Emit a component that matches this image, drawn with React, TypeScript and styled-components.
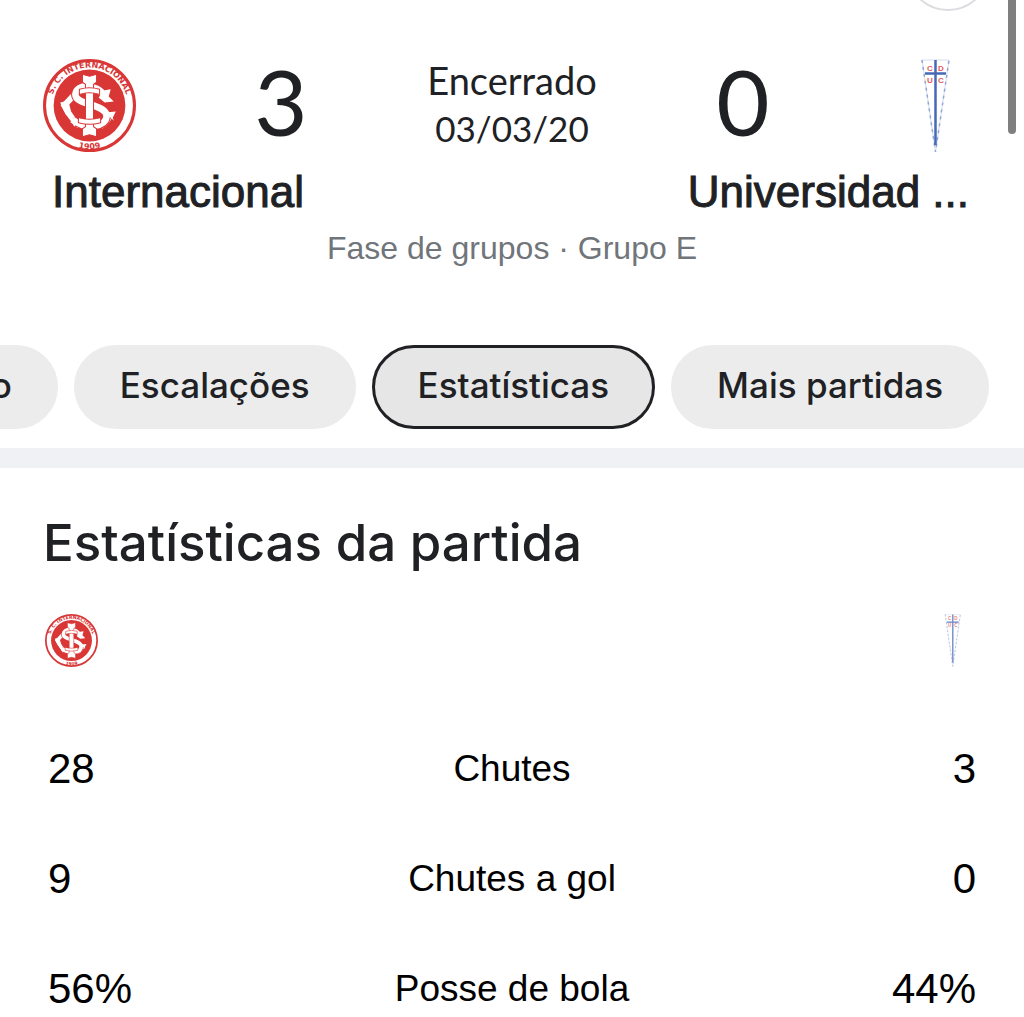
import React from "react";
import styled, { createGlobalStyle } from "styled-components";

const display = `Inter, "Open Sans", sans-serif`;
const body = `"Liberation Sans", Arial, sans-serif`;

const GlobalStyle = createGlobalStyle`
  * { box-sizing: border-box; }
  body { margin: 0; background: #fff; color: #202124; font-family: ${body}; }
`;

const Page = styled.div`
  position: relative;
  height: 100vh;
  overflow: hidden;
  background: #fff;
`;

const ScrollThumb = styled.div`
  position: absolute;
  top: -8px;
  right: 8px;
  width: 8px;
  height: 142px;
  border-radius: 4px;
  background: #7f7f7f;
`;

const RoundButton = styled.button`
  position: absolute;
  top: -73px;
  right: 34px;
  width: 84px;
  height: 84px;
  padding: 0;
  border: 2px solid #dadce0;
  border-radius: 50%;
  background: #fff;
`;

const Match = styled.header`
  display: flex;
  flex-direction: column;
  gap: 16px;
  padding: 56px 43px 0;
`;

const Board = styled.div`
  display: flex;
  justify-content: space-between;
`;

const Team = styled.div<{ $away?: boolean }>`
  display: flex;
  flex-direction: column;
  align-items: ${(p) => (p.$away ? "flex-end" : "center")};
  gap: 12px;
  width: 270px;
`;

const ScoreRow = styled.div<{ $away?: boolean }>`
  display: flex;
  flex-direction: ${(p) => (p.$away ? "row-reverse" : "row")};
  align-items: flex-start;
  justify-content: space-between;
  width: 100%;
  height: 100px;
  padding-top: 3px;
`;

const Score = styled.span`
  width: 64px;
  text-align: center;
  font: 400 92px/84px Lato, sans-serif;
`;

const TeamName = styled.span<{ $away?: boolean }>`
  padding-right: ${(p) => (p.$away ? "12px" : "0")};
  white-space: nowrap;
  font-size: 44px;
  line-height: 48px;
  -webkit-text-stroke: 1px #202124;
`;

const Status = styled.div`
  display: flex;
  flex-direction: column;
  text-align: center;
  font: 400 38px/48px Lato, sans-serif;
`;

const MatchDate = styled.time`
  font-size: 35px;
`;

const Stage = styled.p`
  margin: 0;
  text-align: center;
  color: #70757a;
  font-size: 32px;
  line-height: 32px;
`;

const Chips = styled.nav`
  display: flex;
  justify-content: flex-end;
  gap: 16px;
  padding: 81px 35px 19px 0;
  border-bottom: 20px solid #eff1f4;
`;

const Chip = styled.button<{ $active?: boolean }>`
  flex: none;
  height: 84px;
  padding: 0 43px 4px;
  border: ${(p) => (p.$active ? "3px solid #202124" : "3px solid #ececec")};
  border-radius: 42px;
  background: ${(p) => (p.$active ? "#e6e6e6" : "#ececec")};
  color: #202124;
  font: 500 35px/40px ${display};
`;

const Stats = styled.section`
  padding: 45px 43px 0;
`;

const Title = styled.h2`
  margin: 0;
  font: 500 51px/60px ${display};
`;

const Crests = styled.div`
  display: flex;
  justify-content: space-between;
  padding: 41px 2px 46px;
`;

const Table = styled.table`
  width: 100%;
  border-collapse: collapse;
  table-layout: fixed;
  color: #000;
`;

const Value = styled.td<{ $away?: boolean }>`
  width: 25%;
  height: 110px;
  padding: 0 5px;
  text-align: ${(p) => (p.$away ? "right" : "left")};
  font-size: 42px;
  line-height: 48px;
`;

const Label = styled.th`
  padding: 0;
  font-size: 37px;
  line-height: 48px;
  font-weight: 400;
`;

function InterCrest({ size, id }: { size: number; id: string }) {
  const letterS = "M61 37C54 24 33 24 32 35C32 46 62 44 63 56C63 68 42 70 29 60";
  return (
    <svg width={size} height={size} viewBox="0 0 92 92" role="img" aria-label="Internacional">
      <defs>
        <path id={`${id}-top`} d="M8.500 51A37.800 37.800 0 1 1 83.500 51" />
        <path id={`${id}-bottom`} d="M20 80.500A43 43 0 0 0 72 80.500" />
      </defs>
      <circle cx="46" cy="46" r="44.500" fill="#fff" stroke="#d93636" strokeWidth="3" />
      <circle cx="46" cy="46" r="35.500" fill="#d93636" />
      <g fill="#d93636" fontFamily="DejaVu Sans, sans-serif" fontWeight="700" fontSize="8" textAnchor="middle">
        <text>
          <textPath href={`#${id}-top`} startOffset="50%">S. C. INTERNACIONAL</textPath>
        </text>
        <text>
          <textPath href={`#${id}-bottom`} startOffset="50%">1909</textPath>
        </text>
      </g>
      <path d="M37 29L21 46Q27 58 36 66" fill="none" stroke="#fff" strokeWidth="6" />
      <path d="M17 43l8-2 3 12-5 3z" fill="#fff" />
      <path d="M57 67Q65 62 67 54" fill="none" stroke="#fff" strokeWidth="5" />
      <path d={letterS} fill="none" stroke="#d93636" strokeWidth="8.500" />
      <path d={letterS} fill="none" stroke="#fff" strokeWidth="6.500" />
      <path d="M61 31l6-1-2 7 5 5-9 1-6-5zM62 53l10-1-3 6 1 3zM26 58l9 3-4 6z" fill="#fff" />
      <path d="M39 15l7 2 7-2v8l-3 2v42l3 2v8l-7-2-7 2v-8l3-2V25l-3-2z" fill="#fff" stroke="#d93636" strokeWidth="1" />
      <path d="M36 30q10-3 20 0v5q-10-3-20 0zM35 58q11 3 22 0v5q-11 3-22 0z" fill="#fff" stroke="#d93636" strokeWidth="1" />
    </svg>
  );
}

function CatolicaCrest({ width, height, faded }: { width: number; height: number; faded?: boolean }) {
  return (
    <svg width={width} height={height} viewBox="0 0 92 96" opacity={faded ? 0.75 : 1} role="img" aria-label="Universidad Católica">
      <path d="M33 1H60L46.500 93Z" fill="#fff" stroke="#d3dcef" strokeWidth="1" />
      <path d="M33 1L46.500 93L60 1" fill="none" stroke="#8fa7d6" strokeWidth="1.500" strokeDasharray="3 4" />
      <path d="M46.500 1V86" stroke="#4669b5" strokeWidth="2.500" />
      <path d="M36 14.500H57" stroke="#4669b5" strokeWidth="2.500" />
      <g fill="#e35a5a" fontFamily="Liberation Sans, sans-serif" fontWeight="700" fontSize="8" textAnchor="middle">
        <text x="41" y="11.500">C</text>
        <text x="52" y="11.500">D</text>
        <text x="41" y="23.500">U</text>
        <text x="52" y="23.500">C</text>
      </g>
    </svg>
  );
}

const rows = [
  { home: "28", label: "Chutes", away: "3" },
  { home: "9", label: "Chutes a gol", away: "0" },
  { home: "56%", label: "Posse de bola", away: "44%" },
];

const tabs = ["o", "Escalações", "Estatísticas", "Mais partidas"];

export default function App() {
  return (
    <Page>
      <GlobalStyle />
      <RoundButton aria-label="Menu" />
      <Match>
        <Board>
          <Team>
            <ScoreRow>
              <InterCrest size={93} id="main" />
              <Score>3</Score>
            </ScoreRow>
            <TeamName>Internacional</TeamName>
          </Team>
          <Status>
            <span>Encerrado</span>
            <MatchDate dateTime="2020-03-03">03/03/20</MatchDate>
          </Status>
          <Team $away>
            <ScoreRow $away>
              <CatolicaCrest width={92} height={96} />
              <Score>0</Score>
            </ScoreRow>
            <TeamName $away>Universidad ...</TeamName>
          </Team>
        </Board>
        <Stage>Fase de grupos · Grupo E</Stage>
      </Match>
      <Chips>
        {tabs.map((tab) => (
          <Chip key={tab} type="button" $active={tab === "Estatísticas"}>
            {tab}
          </Chip>
        ))}
      </Chips>
      <Stats>
        <Title>Estatísticas da partida</Title>
        <Crests>
          <InterCrest size={53} id="small" />
          <CatolicaCrest width={53} height={54} faded />
        </Crests>
        <Table>
          <tbody>
            {rows.map((row) => (
              <tr key={row.label}>
                <Value>{row.home}</Value>
                <Label scope="row">{row.label}</Label>
                <Value $away>{row.away}</Value>
              </tr>
            ))}
          </tbody>
        </Table>
      </Stats>
      <ScrollThumb />
    </Page>
  );
}
